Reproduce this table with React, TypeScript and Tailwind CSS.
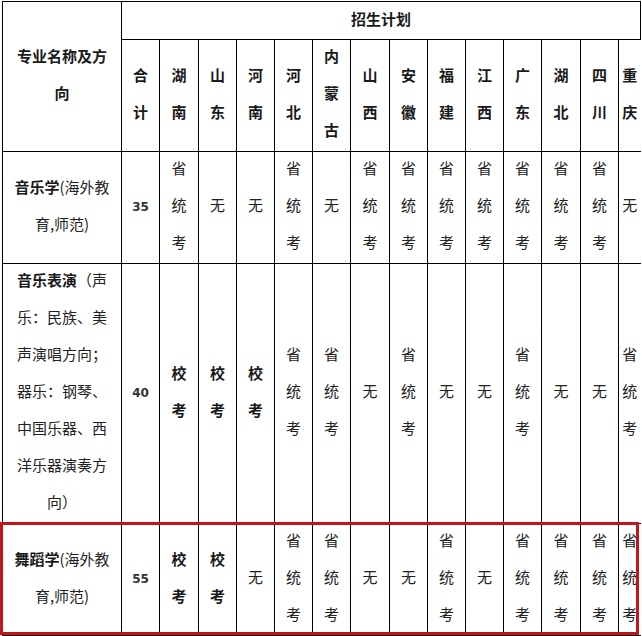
import React from 'react';

const provinces = ['湖南', '山东', '河南', '河北', '内蒙古', '山西', '安徽', '福建', '江西', '广东', '湖北', '四川', '重庆'];

// column widths in px: label, 合计, then the 13 provinces
const colClasses = [
  'w-[119px]', 'w-[38px]', 'w-[39px]', 'w-[38px]', 'w-[38px]', 'w-[38px]', 'w-[38px]', 'w-[39px]',
  'w-[38px]', 'w-[38px]', 'w-[38px]', 'w-[38px]', 'w-[39px]', 'w-[38px]', 'w-[22px]',
];

type Row = {
  label: React.ReactNode;
  total: string;
  values: string[];
  height: string;
};

const rows: Row[] = [
  {
    label: (
      <>
        <b className="font-bold text-[#1a1a1a]">音乐学</b>(海外教<br />育,师范)
      </>
    ),
    total: '35',
    values: ['省统考', '无', '无', '省统考', '无', '省统考', '省统考', '省统考', '省统考', '省统考', '省统考', '省统考', '无'],
    height: 'h-[112px]',
  },
  {
    label: (
      <>
        <b className="font-bold text-[#1a1a1a]">音乐表演</b>（声<br />乐：民族、美<br />声演唱方向；<br />器乐：钢琴、<br />中国乐器、西<br />洋乐器演奏方<br />向）
      </>
    ),
    total: '40',
    values: ['校考', '校考', '校考', '省统考', '省统考', '无', '省统考', '无', '无', '省统考', '无', '无', '省统考'],
    height: 'h-[260px]',
  },
  {
    label: (
      <>
        <b className="font-bold text-[#1a1a1a]">舞蹈学</b>(海外教<br />育,师范)
      </>
    ),
    total: '55',
    values: ['校考', '校考', '无', '省统考', '省统考', '无', '无', '省统考', '无', '省统考', '省统考', '省统考', '省统考'],
    height: 'h-[112px]',
  },
];

function Stack({ text, bold }: { text: string; bold?: boolean }) {
  return (
    <div className={`flex -translate-y-[3px] flex-col items-center ${bold ? 'font-bold text-[#1a1a1a]' : ''}`}>
      {text.split('').map((c, i) => (
        <span key={i}>{c}</span>
      ))}
    </div>
  );
}

export default function App() {
  const cell = 'border border-black p-0 text-center align-middle';

  return (
    <div
      className="relative w-[642px] h-[636px] overflow-hidden bg-white text-[15px] leading-[37px] text-[#222]"
      style={{ fontFamily: '"Noto Sans CJK SC", "Noto Sans", sans-serif' }}
    >
      <table className="ml-[2px] mt-[1px] w-[638px] table-fixed border-collapse">
        <colgroup>
          {colClasses.map((c, i) => (
            <col key={i} className={c} />
          ))}
        </colgroup>
        <thead>
          <tr className="h-[37px]">
            <th rowSpan={2} className={`${cell} font-bold text-[#1a1a1a]`}>
              <div className="-translate-y-[3px]">
                专业名称及方<br />向
              </div>
            </th>
            <th colSpan={14} className={`${cell} font-bold text-[#1a1a1a]`}>
              <div className="-translate-y-[2px]">招生计划</div>
            </th>
          </tr>
          <tr className="h-[112px]">
            <th className={cell}>
              <Stack text="合计" bold />
            </th>
            {provinces.map((p, i) => (
              <th key={p} className={`${cell} ${i === provinces.length - 1 ? 'border-r-0' : ''}`}>
                <Stack text={p} bold />
              </th>
            ))}
          </tr>
        </thead>
        <tbody>
          {rows.map((r) => (
            <tr key={r.total} className={r.height}>
              <td className={`${cell} px-2`}>
                <div className="-translate-y-[3px]">{r.label}</div>
              </td>
              <td
                className={`${cell} text-[12px] font-bold text-[#333]`}
                style={{ fontFamily: '"DejaVu Sans", sans-serif' }}
              >
                {r.total}
              </td>
              {r.values.map((v, i) => (
                <td key={i} className={`${cell} ${i === r.values.length - 1 ? 'border-r-0' : ''}`}>
                  <Stack text={v} bold={v === '校考'} />
                </td>
              ))}
            </tr>
          ))}
        </tbody>
      </table>

      {/* red highlight box drawn over the last row */}
      <div className="pointer-events-none absolute left-0 top-[522px] h-[113px] w-[639px] border-[3px] border-[#c3161c]" />
    </div>
  );
}
